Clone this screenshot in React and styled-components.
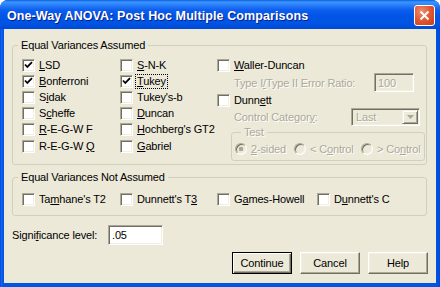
import React from "react";
import styled, { createGlobalStyle } from "styled-components";

const Global = createGlobalStyle`
  body {
    margin: 0;
    background: #ffffff;
  }
`;

function Check({ checked }) {
  return (
    <Box>
      {checked && (
        <svg width="11" height="11" viewBox="0 0 11 11">
          <path d="M2 4.5 L4.3 7 L9 2.2" fill="none" stroke="#000" strokeWidth="1.8" />
        </svg>
      )}
    </Box>
  );
}

function Item({ checked, focus, children }) {
  return (
    <Row>
      <Check checked={checked} />
      <Label $focus={focus}>{children}</Label>
    </Row>
  );
}

function Radio({ checked, width, children }) {
  return (
    <RadioItem $w={width}>
      <RadioDot $checked={checked} />
      <Dim>{children}</Dim>
    </RadioItem>
  );
}

export default function App() {
  return (
    <>
      <Global />
      <Window>
        <TitleBar>
          <Title>One-Way ANOVA: Post Hoc Multiple Comparisons</Title>
          <Close>
            <svg width="11" height="11" viewBox="0 0 11 11">
              <path d="M1.5 1.5 L9.5 9.5 M9.5 1.5 L1.5 9.5" stroke="#fff" strokeWidth="2" />
            </svg>
          </Close>
        </TitleBar>
        <Client>
          <Group>
            <Legend>Equal Variances Assumed</Legend>
            <Columns>
              <Col $w={98}>
                <Item checked><u>L</u>SD</Item>
                <Item checked><u>B</u>onferroni</Item>
                <Item>S<u>i</u>dak</Item>
                <Item>S<u>c</u>heffe</Item>
                <Item><u>R</u>-E-G-W F</Item>
                <Item>R-E-G-W <u>Q</u></Item>
              </Col>
              <Col $w={97}>
                <Item><u>S</u>-N-K</Item>
                <Item checked focus><u>T</u>ukey</Item>
                <Item>Tukey's-b</Item>
                <Item><u>D</u>uncan</Item>
                <Item><u>H</u>ochberg's GT2</Item>
                <Item><u>G</u>abriel</Item>
              </Col>
              <Side>
                <Item><u>W</u>aller-Duncan</Item>
                <SubRow $h={19}>
                  <Dim>Type I<u>/</u>Type II Error Ratio:</Dim>
                  <Field $w={40} $h={19} $right={11} $disabled>100</Field>
                </SubRow>
                <Item>Dunn<u>e</u>tt</Item>
                <SubRow $h={18}>
                  <Dim>Control Categor<u>y</u>:</Dim>
                  <Combo>
                    <Dim>Last</Dim>
                    <ComboArrow>
                      <svg width="7" height="4" viewBox="0 0 7 4">
                        <path d="M0 0 H7 L3.5 4 Z" fill="#aca899" />
                      </svg>
                    </ComboArrow>
                  </Combo>
                </SubRow>
                <TestGroup>
                  <TestLegend>Test</TestLegend>
                  <RadioRow>
                    <Radio checked width={59}><u>2</u>-sided</Radio>
                    <Radio width={67}>&lt; C<u>o</u>ntrol</Radio>
                    <Radio>&gt; Co<u>n</u>trol</Radio>
                  </RadioRow>
                </TestGroup>
              </Side>
            </Columns>
          </Group>
          <Group $second>
            <Legend>Equal Variances Not Assumed</Legend>
            <Columns $pad="7px 0 7px 9px">
              <Col $w={98}>
                <Item>Ta<u>m</u>hane's T2</Item>
              </Col>
              <Col $w={97}>
                <Item>Dunnett's T<u>3</u></Item>
              </Col>
              <Col $w={100}>
                <Item>G<u>a</u>mes-Howell</Item>
              </Col>
              <Col>
                <Item>D<u>u</u>nnett's C</Item>
              </Col>
            </Columns>
          </Group>
          <SigRow>
            <SigLabel>Signi<u>f</u>icance level:</SigLabel>
            <Field $w={55} $h={20}>.05</Field>
          </SigRow>
          <Buttons>
            <Button $default>Continue</Button>
            <Button>Cancel</Button>
            <Button>Help</Button>
          </Buttons>
        </Client>
      </Window>
    </>
  );
}

const Window = styled.div`
  width: 440px;
  height: 287px;
  display: flex;
  flex-direction: column;
  background: linear-gradient(90deg, #0831d9 0, #166aee 1px, #0055e5 3px, #0055e5 436px, #0148d9 100%);
  border-radius: 8px 8px 0 0;
  overflow: hidden;
  font-family: "Liberation Sans", Arial, sans-serif;
  font-size: 11px;
  letter-spacing: -0.15px;
  color: #000;
`;

const TitleBar = styled.div`
  height: 29px;
  flex-shrink: 0;
  display: flex;
  align-items: center;
  padding: 2px 5px 0 7px;
  box-sizing: border-box;
  background: linear-gradient(
    180deg,
    #0a5fe0 0,
    #3d95ff 2px,
    #2a80f8 5px,
    #0d5ef0 10px,
    #0055e5 16px,
    #0054e3 24px,
    #0148d6 29px
  );
`;

const Title = styled.div`
  font-family: "Liberation Sans", Arial, sans-serif;
  font-weight: bold;
  font-size: 12.5px;
  letter-spacing: 0.1px;
  color: #fff;
  text-shadow: 1px 1px 0 #0a1e8a;
`;

const Close = styled.div`
  margin-left: auto;
  width: 21px;
  height: 21px;
  box-sizing: border-box;
  border: 1px solid #fff;
  border-radius: 3px;
  background: radial-gradient(circle at 35% 30%, #f0906f 0, #e35a35 45%, #c43c15 100%);
  display: flex;
  align-items: center;
  justify-content: center;
`;

const Client = styled.div`
  flex: 1;
  margin: 0 4px 4px 4px;
  background: #ece9d8;
  display: flex;
  flex-direction: column;
  padding: 10px 9px 9px 8px;
  box-sizing: border-box;
`;

const Group = styled.fieldset`
  margin: ${(p) => (p.$second ? "6px 0 0 0" : "0")};
  padding: 0;
  border: 1px solid #d0d0bf;
  border-radius: 3px;
  min-width: 0;
`;

const Legend = styled.legend`
  margin-left: 5px;
  padding: 0 3px;
  line-height: 13px;
  font-size: 11px;
`;

const Columns = styled.div`
  display: flex;
  padding: ${(p) => p.$pad || "5px 1px 3px 9px"};
`;

const Col = styled.div`
  display: flex;
  flex-direction: column;
  width: ${(p) => (p.$w ? `${p.$w}px` : "auto")};
  flex: ${(p) => (p.$w ? "none" : "1")};
`;

const Side = styled.div`
  flex: 1;
  display: flex;
  flex-direction: column;
`;

const Row = styled.div`
  height: 16.2px;
  display: flex;
  align-items: center;
  gap: 4px;
  white-space: nowrap;
`;

const Box = styled.div`
  width: 13px;
  height: 13px;
  box-sizing: border-box;
  flex-shrink: 0;
  background: #fff;
  border: 1px solid;
  border-color: #aca899 #fff #fff #aca899;
  box-shadow: inset 1px 1px 0 #716f64, inset -1px -1px 0 #f1efe2;
  display: flex;
  align-items: center;
  justify-content: center;
`;

const Label = styled.span`
  line-height: 13px;
  padding: 0 1px;
  margin-left: -1px;
  outline: ${(p) => (p.$focus ? "1px dotted #000" : "none")};
`;

const Dim = styled.span`
  color: #aca899;
  text-shadow: 1px 1px 0 #fff;
  white-space: nowrap;
`;

const SubRow = styled.div`
  height: ${(p) => p.$h}px;
  display: flex;
  align-items: center;
  padding-left: 17px;
`;

const Field = styled.div`
  margin-left: ${(p) => (p.$right !== undefined ? "auto" : "0")};
  margin-right: ${(p) => p.$right || 0}px;
  width: ${(p) => p.$w}px;
  height: ${(p) => p.$h}px;
  box-sizing: border-box;
  border: 1px solid;
  border-color: #aca899 #fff #fff #aca899;
  box-shadow: inset 1px 1px 0 #716f64, inset -1px -1px 0 #f1efe2;
  background: ${(p) => (p.$disabled ? "#ece9d8" : "#fff")};
  color: ${(p) => (p.$disabled ? "#aca899" : "#000")};
  text-shadow: ${(p) => (p.$disabled ? "1px 1px 0 #fff" : "none")};
  padding: 0 3px;
  display: flex;
  align-items: center;
  font-size: 11px;
`;

const Combo = styled.div`
  margin-left: auto;
  margin-right: 5px;
  width: 69px;
  height: 18px;
  box-sizing: border-box;
  border: 1px solid;
  border-color: #aca899 #fff #fff #aca899;
  box-shadow: inset 1px 1px 0 #716f64, inset -1px -1px 0 #f1efe2;
  background: #ece9d8;
  display: flex;
  align-items: center;
  padding: 1px 1px 1px 4px;
`;

const ComboArrow = styled.div`
  margin-left: auto;
  width: 16px;
  height: 14px;
  box-sizing: border-box;
  border: 1px solid;
  border-color: #f1efe2 #716f64 #716f64 #f1efe2;
  box-shadow: inset 1px 1px 0 #fff, inset -1px -1px 0 #aca899;
  display: flex;
  align-items: center;
  justify-content: center;
`;

const TestGroup = styled.fieldset`
  margin: 0 0 0 14px;
  padding: 2px 0 3px 3px;
  border: 1px solid #d0d0bf;
  border-radius: 3px;
  min-width: 0;
`;

const TestLegend = styled.legend`
  margin-left: 6px;
  padding: 0 3px;
  line-height: 13px;
  color: #aca899;
  text-shadow: 1px 1px 0 #fff;
`;

const RadioRow = styled.div`
  display: flex;
  align-items: center;
  height: 16px;
`;

const RadioItem = styled.div`
  display: flex;
  align-items: center;
  gap: 4px;
  width: ${(p) => (p.$w ? `${p.$w}px` : "auto")};
  flex-shrink: 0;
`;

const RadioDot = styled.div`
  width: 12px;
  height: 12px;
  border-radius: 50%;
  box-sizing: border-box;
  border: 1px solid;
  border-color: #aca899 #fff #fff #aca899;
  box-shadow: inset 1px 1px 0 #716f64, inset -1px -1px 0 #f1efe2;
  background: ${(p) =>
    p.$checked ? "radial-gradient(circle, #aca899 0 2px, #ece9d8 2.5px)" : "#ece9d8"};
`;

const SigRow = styled.div`
  margin-top: 9px;
  height: 20px;
  display: flex;
  align-items: center;
`;

const SigLabel = styled.span`
  width: 96px;
`;

const Buttons = styled.div`
  margin-top: auto;
  margin-right: -1px;
  display: flex;
  justify-content: flex-end;
  gap: 8px;
`;

const Button = styled.div`
  width: 60px;
  height: 22px;
  box-sizing: border-box;
  display: flex;
  align-items: center;
  justify-content: center;
  background: #ece9d8;
  border: 1px solid;
  border-color: ${(p) => (p.$default ? "#000" : "#fff #716f64 #716f64 #fff")};
  box-shadow: ${(p) =>
    p.$default
      ? "inset 1px 1px 0 #fff, inset -1px -1px 0 #716f64, inset -2px -2px 0 #aca899"
      : "inset -1px -1px 0 #aca899, inset 1px 1px 0 #f1efe2"};
  font-size: 11px;
`;
